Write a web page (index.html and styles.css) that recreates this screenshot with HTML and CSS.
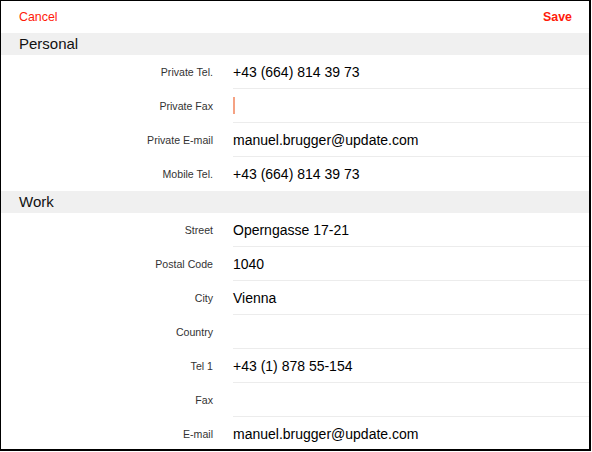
FILE: index.html
```html
<!DOCTYPE html>
<html>
<head>
<meta charset="utf-8">
<link rel="stylesheet" href="styles.css">
</head>
<body>
<div class="frame">
  <div class="topbar">
    <span class="btn">Cancel</span>
    <span class="btn save">Save</span>
  </div>
  <div class="section">Personal</div>
  <div class="group">
    <div class="row"><span class="label">Private Tel.</span><span class="value">+43 (664) 814 39 73</span></div>
    <div class="row"><span class="label">Private Fax</span><span class="value"><span class="caret"></span></span></div>
    <div class="row"><span class="label">Private E-mail</span><span class="value">manuel.brugger@update.com</span></div>
    <div class="row"><span class="label">Mobile Tel.</span><span class="value">+43 (664) 814 39 73</span></div>
  </div>
  <div class="section">Work</div>
  <div class="group">
    <div class="row"><span class="label">Street</span><span class="value">Operngasse 17-21</span></div>
    <div class="row"><span class="label">Postal Code</span><span class="value">1040</span></div>
    <div class="row"><span class="label">City</span><span class="value">Vienna</span></div>
    <div class="row"><span class="label">Country</span><span class="value"></span></div>
    <div class="row"><span class="label">Tel 1</span><span class="value">+43 (1) 878 55-154</span></div>
    <div class="row"><span class="label">Fax</span><span class="value"></span></div>
    <div class="row"><span class="label">E-mail</span><span class="value">manuel.brugger@update.com</span></div>
  </div>
</div>
</body>
</html>
```
FILE: styles.css
```css
html, body {
  margin: 0;
  padding: 0;
  background: #fff;
}
body {
  font-family: "Liberation Sans", Arial, sans-serif;
}
.frame {
  box-sizing: border-box;
  width: 591px;
  height: 451px;
  border-top: 1px solid #000;
  border-left: 1px solid #000;
  border-right: 2px solid #000;
  border-bottom: 2px solid #000;
  overflow: hidden;
  display: flex;
  flex-direction: column;
}
.topbar {
  height: 32px;
  flex: none;
  display: flex;
  justify-content: space-between;
  align-items: center;
  padding: 0 17px 0 18px;
}
.btn {
  color: #ff1a0a;
  font-size: 12.4px;
}
.save {
  font-weight: bold;
}
.section {
  flex: none;
  height: 22px;
  line-height: 22px;
  background: #f0f0f0;
  padding-left: 18px;
  font-size: 15px;
  color: #111;
}
.group {
  display: flex;
  flex-direction: column;
}
.row {
  height: 34px;
  display: flex;
  align-items: stretch;
}
.label {
  width: 212px;
  flex: none;
  text-align: right;
  font-size: 10.6px;
  color: #333;
  display: flex;
  align-items: center;
  justify-content: flex-end;
}
.value {
  flex: 1;
  margin-left: 20px;
  display: flex;
  align-items: center;
  font-size: 14px;
  color: #000;
  border-bottom: 1px solid #ececec;
}
.row:last-child .value {
  border-bottom: none;
}
.caret {
  width: 2px;
  height: 17px;
  background: #f5a283;
}
```
